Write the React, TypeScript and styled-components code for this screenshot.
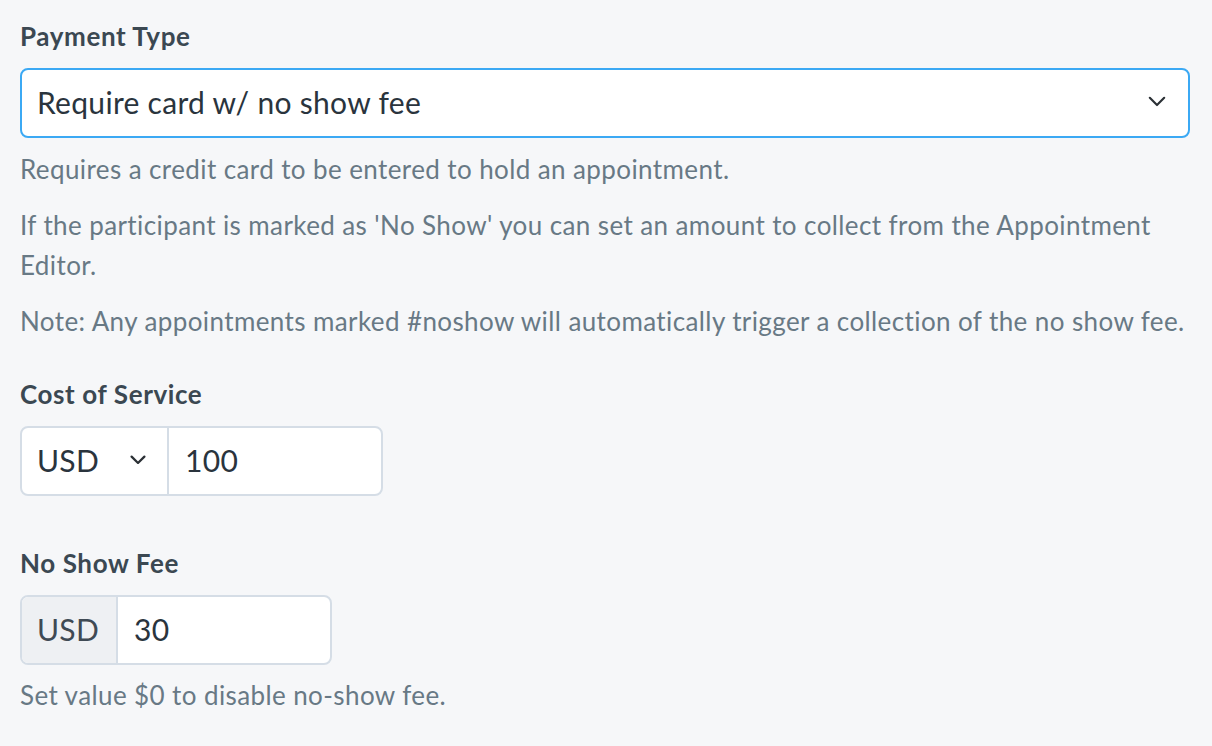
import React from 'react'
import styled, { createGlobalStyle } from 'styled-components'

const GlobalStyle = createGlobalStyle`
	html, body {
		margin: 0;
		padding: 0;
		background: #f6f7f9;
	}
	body {
		font-family: Lato, 'Open Sans', sans-serif;
		color: #2f3a44;
	}
`

const Chevron = ({ size = 18, weight = 2.4 }: { size?: number; weight?: number }) => (
	<svg width={size} height={size * 0.6} viewBox='0 0 20 12' fill='none'>
		<path d='M2 2l8 8 8-8' stroke='#2b3035' strokeWidth={weight} strokeLinecap='round' strokeLinejoin='round' />
	</svg>
)

const App = () => {
	return (
		<>
			<GlobalStyle />
			<Page>
				<Field spacing={35}>
					<Label>Payment Type</Label>
					<SelectBox>
						<SelectText>Require card w/ no show fee</SelectText>
						<Chevron />
					</SelectBox>
					<Help first>Requires a credit card to be entered to hold an appointment.</Help>
					<Help>
						If the participant is marked as 'No Show' you can set an amount to collect from the
						Appointment Editor.
					</Help>
					<Help>
						Note: Any appointments marked #noshow will automatically trigger a collection of the no
						show fee.
					</Help>
				</Field>

				<Field spacing={49}>
					<Label>Cost of Service</Label>
					<Group width={363}>
						<CurrencySelect>
							<span>USD</span>
							<Chevron size={16} weight={2.8} />
						</CurrencySelect>
						<Value>100</Value>
					</Group>
				</Field>

				<Field spacing={0}>
					<Label>No Show Fee</Label>
					<Group width={312}>
						<Addon>USD</Addon>
						<Value>30</Value>
					</Group>
					<Help first small>
						Set value $0 to disable no-show fee.
					</Help>
				</Field>
			</Page>
		</>
	)
}

const Page = styled.div`
	padding: 18px 22px 20px 20px;
	max-width: 1170px;
`

const Field = styled.div<{ spacing: number }>`
	margin-bottom: ${(p) => p.spacing}px;
`

const Label = styled.div`
	font-size: 26px;
	font-weight: 700;
	letter-spacing: 0.6px;
	line-height: 36px;
	color: #3b4852;
	margin-bottom: 14px;
`

const SelectBox = styled.div`
	height: 70px;
	box-sizing: border-box;
	border: 2px solid #3ba9f4;
	border-radius: 8px;
	background: #fff;
	display: flex;
	align-items: center;
	justify-content: space-between;
	padding: 0 22px 3px 15px;
`

const SelectText = styled.span`
	font-size: 30px;
	letter-spacing: 0.3px;
	color: #2a343d;
`

const Help = styled.p<{ first?: boolean; small?: boolean }>`
	margin: ${(p) => (p.first ? (p.small ? '10px' : '11px') : '16px')} 0 0;
	font-size: 26px;
	letter-spacing: 0.4px;
	line-height: 40px;
	color: #687985;
`

const Group = styled.div<{ width: number }>`
	width: ${(p) => p.width}px;
	height: 70px;
	box-sizing: border-box;
	display: flex;
	border: 2px solid #d5dde6;
	border-radius: 8px;
	background: #fff;
	overflow: hidden;
`

const CurrencySelect = styled.div`
	width: 147px;
	box-sizing: border-box;
	display: flex;
	align-items: center;
	justify-content: space-between;
	padding: 0 21px 3px 15px;
	border-right: 2px solid #d5dde6;
	font-size: 30px;
	letter-spacing: 0.3px;
	color: #2a343d;
`

const Addon = styled.div`
	width: 96px;
	box-sizing: border-box;
	display: flex;
	align-items: center;
	padding: 0 0 3px 15px;
	background: #eef0f3;
	border-right: 2px solid #d5dde6;
	font-size: 30px;
	letter-spacing: 0.3px;
	color: #3f4a54;
`

const Value = styled.div`
	flex: 1;
	display: flex;
	align-items: center;
	padding: 0 0 3px 16px;
	font-size: 30px;
	letter-spacing: 0.3px;
	color: #2a343d;
`

export default App
